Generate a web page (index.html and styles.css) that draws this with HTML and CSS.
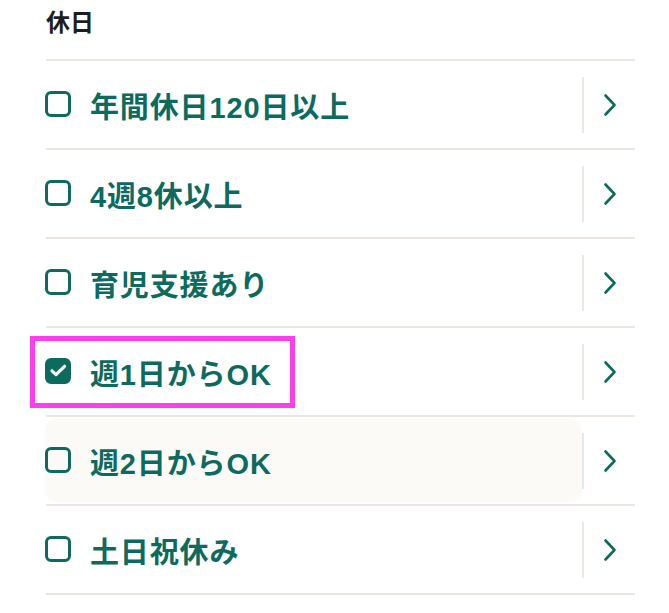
FILE: index.html
```html
<!DOCTYPE html>
<html lang="ja">
<head>
<meta charset="UTF-8">
<meta name="viewport" content="width=device-width, initial-scale=1.0">
<title>休日</title>
<link rel="stylesheet" href="styles.css">
</head>
<body>

<div class="section">
    <h3 class="title">休日</h3>
    <ul class="options">
        <li class="option">
            <label class="label"><span class="box"></span>年間休日120日以上</label>
            <span class="more"><svg width="14" height="24" viewBox="0 0 14 24"><path d="M2.5 2.5l9 9.5-9 9.5" /></svg></span>
        </li>
        <li class="option">
            <label class="label"><span class="box"></span>4週8休以上</label>
            <span class="more"><svg width="14" height="24" viewBox="0 0 14 24"><path d="M2.5 2.5l9 9.5-9 9.5" /></svg></span>
        </li>
        <li class="option">
            <label class="label"><span class="box"></span>育児支援あり</label>
            <span class="more"><svg width="14" height="24" viewBox="0 0 14 24"><path d="M2.5 2.5l9 9.5-9 9.5" /></svg></span>
        </li>
        <li class="option">
            <label class="label">
                <span class="box checked"><svg width="19" height="19" viewBox="0 0 19 19"><path d="M3 9.8l4 3.8 8.5-8.3" /></svg></span>週1日からOK
                <span class="marker"></span>
            </label>
            <span class="more"><svg width="14" height="24" viewBox="0 0 14 24"><path d="M2.5 2.5l9 9.5-9 9.5" /></svg></span>
        </li>
        <li class="option">
            <label class="label hover"><span class="box"></span>週2日からOK</label>
            <span class="more"><svg width="14" height="24" viewBox="0 0 14 24"><path d="M2.5 2.5l9 9.5-9 9.5" /></svg></span>
        </li>
        <li class="option">
            <label class="label"><span class="box"></span>土日祝休み</label>
            <span class="more"><svg width="14" height="24" viewBox="0 0 14 24"><path d="M2.5 2.5l9 9.5-9 9.5" /></svg></span>
        </li>
    </ul>
</div>

</body>
</html>
```
FILE: styles.css
```css
body {
    font-family: "Liberation Sans", "Noto Sans CJK JP", sans-serif;
    margin: 0;
    padding: 0;
    background-color: #fff;
}
.section {
    padding: 0 34px 0 45px;
}
.title {
    margin: 0 0 0 1px;
    height: 61px;
    box-sizing: border-box;
    padding-top: 9px;
    font-size: 24px;
    line-height: 28px;
    font-weight: bold;
    color: #1e1e1e;
    border-bottom: 2px solid #ebe6df;
}
.options {
    list-style-type: none;
    margin: 0 0 0 1px;
    padding: 0;
}
.option {
    display: flex;
    align-items: center;
    height: 87px;
    border-bottom: 2px solid #ebe6df;
}
.label {
    position: relative;
    flex: 1;
    display: flex;
    align-items: center;
    gap: 19px;
    height: 83px;
    margin: 2px 0 2px -1px;
    border-radius: 12px;
    font-size: 29px;
    font-weight: bold;
    letter-spacing: 0.03em;
    color: #0c6b5e;
    cursor: pointer;
}
.label.hover {
    background-color: #fcfaf6;
}
.box {
    display: flex;
    align-items: center;
    justify-content: center;
    width: 26px;
    height: 26px;
    min-width: 26px;
    box-sizing: border-box;
    border: 3.5px solid #0c6b5e;
    border-radius: 6px;
    margin-bottom: 2px;
}
.box.checked {
    background-color: #0c6b5e;
}
.box svg path {
    fill: none;
    stroke: #fff;
    stroke-width: 3.2;
    stroke-linecap: round;
    stroke-linejoin: round;
}
.more {
    display: flex;
    align-items: center;
    justify-content: center;
    width: 51px;
    height: 56px;
    border-left: 2px solid #ece7e0;
}
.more svg path {
    fill: none;
    stroke: #0c6b5e;
    stroke-width: 2.6;
    stroke-linecap: round;
    stroke-linejoin: round;
}
/* recuadro de anotacion */
.marker {
    position: absolute;
    left: -15px;
    top: 6px;
    width: 265px;
    height: 72px;
    box-sizing: border-box;
    border: 5px solid #ff3dec;
    pointer-events: none;
}
```
